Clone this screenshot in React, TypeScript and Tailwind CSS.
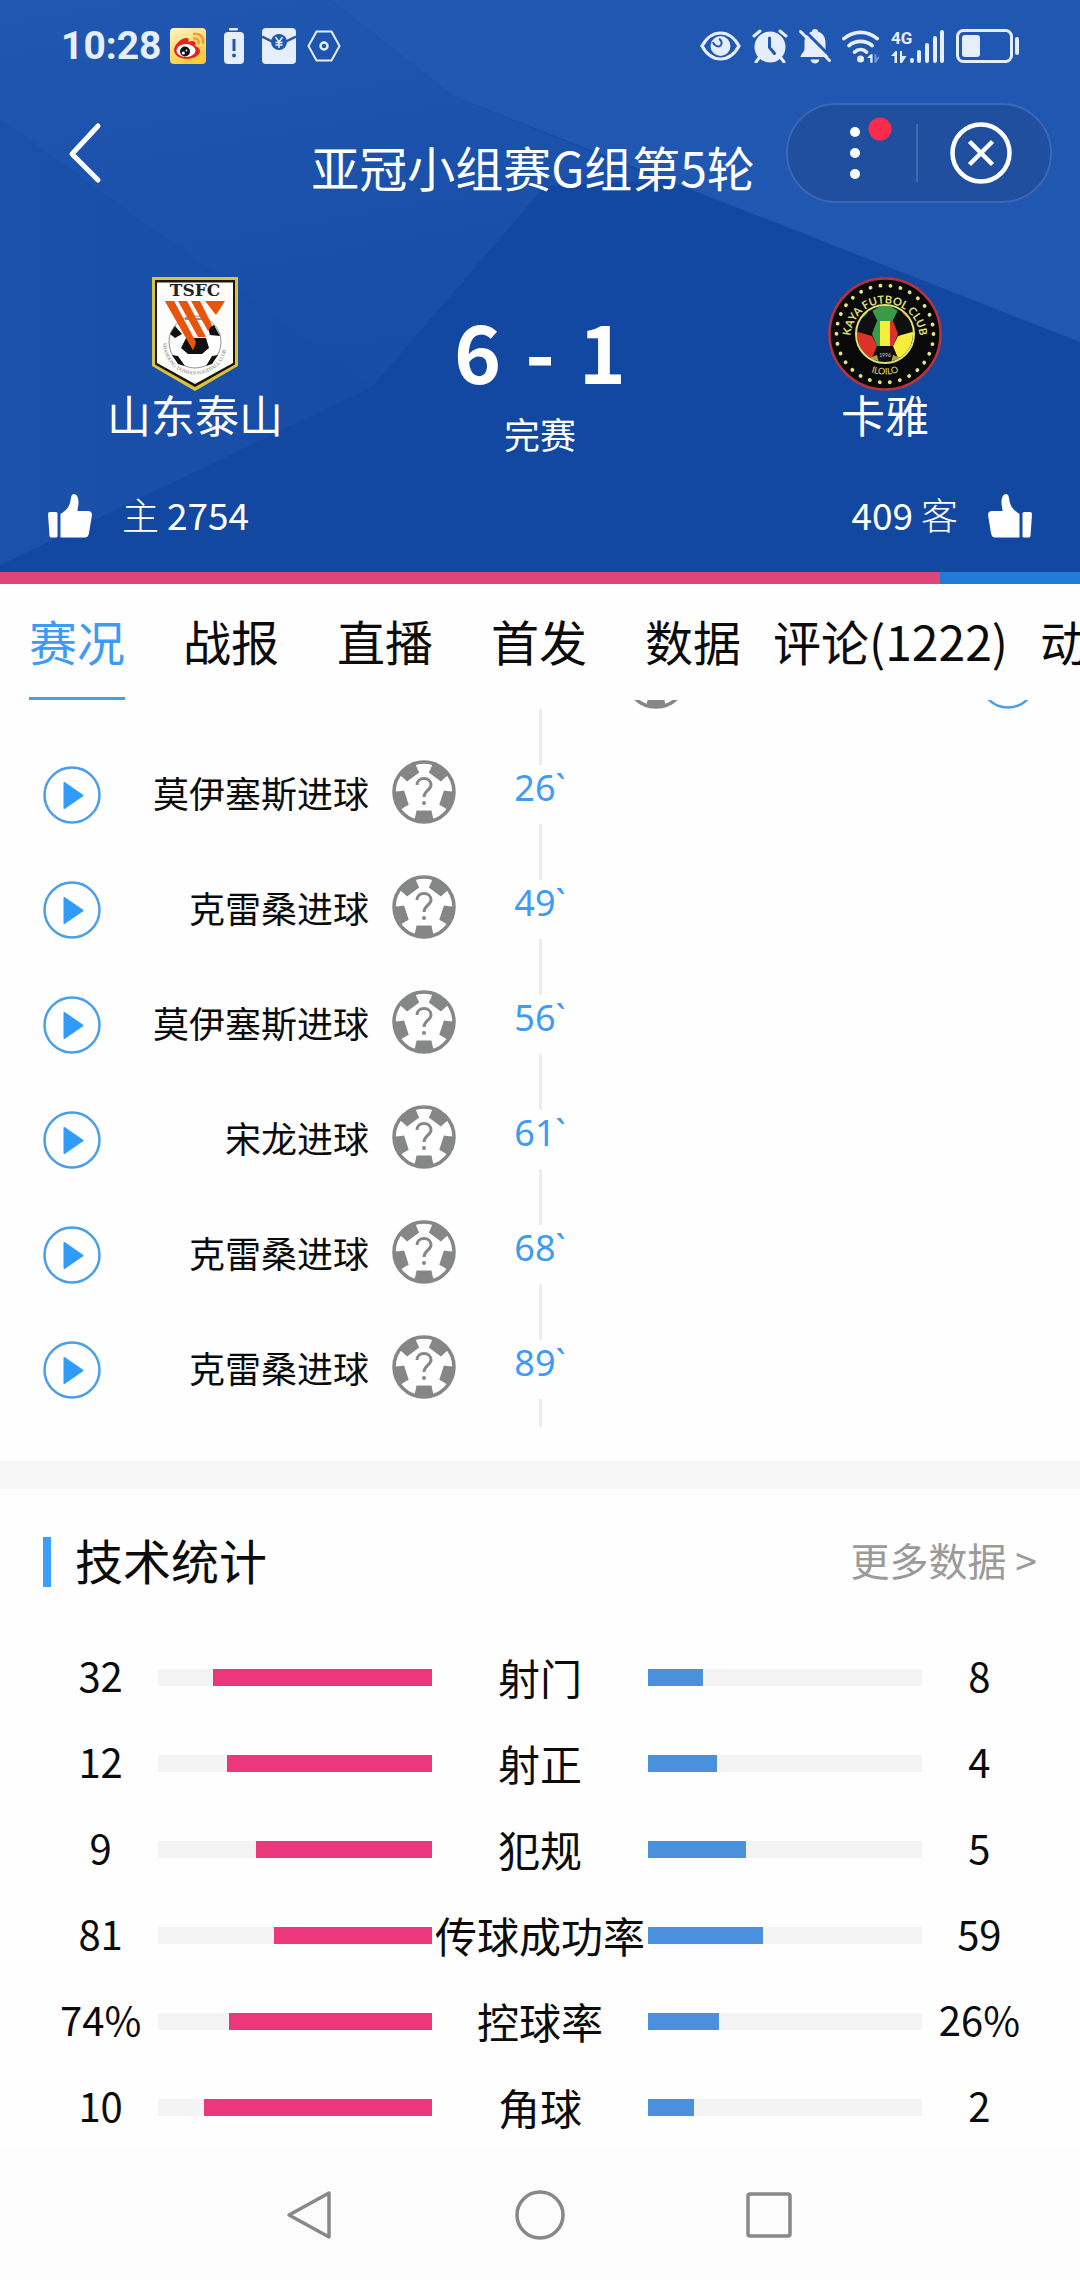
import React, { useState } from 'react';

interface MatchEvent {
  minute: string;
  side: 'home' | 'away';
  text: string;
}

interface Stat {
  label: string;
  home: string;
  away: string;
}

const tabs = ['赛况', '战报', '直播', '首发', '数据', '评论(1222)', '动态'];

const events: MatchEvent[] = [
  { minute: '', side: 'away', text: '' },
  { minute: '26`', side: 'home', text: '莫伊塞斯进球' },
  { minute: '49`', side: 'home', text: '克雷桑进球' },
  { minute: '56`', side: 'home', text: '莫伊塞斯进球' },
  { minute: '61`', side: 'home', text: '宋龙进球' },
  { minute: '68`', side: 'home', text: '克雷桑进球' },
  { minute: '89`', side: 'home', text: '克雷桑进球' },
];

const stats: Stat[] = [
  { label: '射门', home: '32', away: '8' },
  { label: '射正', home: '12', away: '4' },
  { label: '犯规', home: '9', away: '5' },
  { label: '传球成功率', home: '81', away: '59' },
  { label: '控球率', home: '74%', away: '26%' },
  { label: '角球', home: '10', away: '2' },
];

const likes = { home: 2754, away: 409 };

const share = (a: string, b: string) => (parseInt(a) / (parseInt(a) + parseInt(b))) * 100;

const WeiboIcon = () => (
  <svg width="36" height="36" viewBox="0 0 36 36">
    <defs>
      <linearGradient id="weibo-bg" x1="0" y1="0" x2="0.4" y2="1">
        <stop offset="0" stopColor="#fff3c4" />
        <stop offset="1" stopColor="#fdcb3e" />
      </linearGradient>
    </defs>
    <rect width="36" height="36" rx="4" fill="url(#weibo-bg)" />
    <path d="M4 22c0-5 7-12 12-12 3 0 3 2 2.500 4 3-1.500 7-1.500 7 2 0 1-.500 2-.500 2 3 1 5 2.500 5 5 0 4-6 8-13 8S4 27 4 22z" fill="#e1241d" />
    <ellipse cx="16" cy="22.500" rx="9.500" ry="6.500" fill="#fff" />
    <circle cx="15" cy="23.500" r="5" fill="#111" />
    <circle cx="13.300" cy="25" r="1.600" fill="#fff" />
    <circle cx="16.500" cy="22.500" r="0.900" fill="#fff" />
    <path d="M24 10.500c3-.500 5 1.500 4.500 4.500M24 6c6-1 10 3 9 9" fill="none" stroke="#f39a33" strokeWidth="2.400" strokeLinecap="round" />
  </svg>
);

const LowBatteryIcon = () => (
  <svg width="20" height="36" viewBox="0 0 20 36" fill="#e6eefb">
    <rect x="5" y="0" width="9" height="2.500" rx="1" />
    <rect x="0" y="4" width="20" height="32" rx="4" />
    <rect x="8.500" y="11" width="3" height="12" fill="#2057b0" />
    <circle cx="10" cy="27.500" r="2" fill="#2057b0" />
  </svg>
);

const EnvelopeIcon = () => (
  <svg width="34" height="36" viewBox="0 0 34 36">
    <rect width="34" height="36" rx="4" fill="#e6eefb" />
    <path d="M0 8.500 11 14M34 8.500 23 14" stroke="#2057b0" strokeWidth="2.500" />
    <circle cx="17" cy="14" r="8" fill="#2057b0" />
    <path d="m13.500 9 3.500 5 3.500-5M17 14v6M13.500 14.500h7M13.500 17h7" fill="none" stroke="#e6eefb" strokeWidth="1.500" />
  </svg>
);

const HexIcon = () => (
  <svg width="34" height="32" viewBox="0 0 34 32" fill="none" stroke="#e6eefb" strokeWidth="2">
    <path d="M9.500 1.500h15L32.500 16l-8 14.500h-15L1.500 16z" />
    <circle cx="17" cy="16" r="3.500" strokeWidth="2.500" />
  </svg>
);

const EyeIcon = () => (
  <svg width="41" height="30" viewBox="0 0 41 30">
    <path d="M2 15C7 6 13 2 20.500 2S34 6 39 15c-5 9-11 13-18.500 13S7 24 2 15z" fill="none" stroke="#e6eefb" strokeWidth="3.200" />
    <circle cx="20.500" cy="15" r="10" fill="#e6eefb" />
    <path d="M13 11c1 4 6 6 8 3 1.500-3 0-5-2-6" fill="none" stroke="#2057b0" strokeWidth="2" />
  </svg>
);

const AlarmIcon = () => (
  <svg width="36" height="34" viewBox="0 0 36 34">
    <circle cx="18" cy="18" r="15.500" fill="#e6eefb" />
    <path d="M2 7 8 2M34 7l-6-5M7 29l-3 4M29 29l3 4" stroke="#e6eefb" strokeWidth="3" strokeLinecap="round" />
    <path d="M17.500 9v9.500l5 6" fill="none" stroke="#2057b0" strokeWidth="3" strokeLinecap="round" />
  </svg>
);

const BellOffIcon = () => (
  <svg width="32" height="36" viewBox="0 0 32 36">
    <path d="M16 1c2 0 3 1 3 2.500 5 1.500 7.500 6 7.500 11V21c0 3 3 5 3 8H1.500c0-3 4-5 4-8v-7c0-5 3-9 7.500-10.500C13 2 14 1 16 1z" fill="#e6eefb" />
    <path d="M11.500 31.500h9c-.500 2.500-2.500 4-4.500 4s-4-1.500-4.500-4z" fill="#e6eefb" />
    <path d="M4 1 33 30" stroke="#2057b0" strokeWidth="3" />
    <path d="M1.500 3.500 30.500 32.500" stroke="#e6eefb" strokeWidth="3" strokeLinecap="round" />
  </svg>
);

const WifiIcon = () => (
  <svg width="38" height="34" viewBox="0 0 41 36">
    <g fill="none" stroke="#e6eefb" strokeWidth="4" strokeLinecap="round">
      <path d="M2 10c11-9 25-9 36 0" />
      <path d="M7.500 17.500c7-6 18-6 25 0" />
      <path d="M13.500 24.500c4-3.500 9-3.500 13 0" />
    </g>
    <circle cx="20" cy="32" r="3.800" fill="#e6eefb" />
    <path d="m27 31 4-4h2v9h-2.500v-5z" fill="#e6eefb" />
    <path d="M35 27h2v4l3-2v2l-3 5h-2z" fill="#6f97d6" />
  </svg>
);

const SignalIcon = () => (
  <svg width="54" height="36" viewBox="0 0 54 36" fill="#e6eefb">
    <text x="0" y="16" fontSize="17" fontWeight="700" fontFamily="Roboto, sans-serif">4G</text>
    <path d="m0 28 4.500-5H6v12H3.500v-7zM9 23h2v5h4.500L11 35H9z" />
    <rect x="19" y="30" width="4" height="5" rx="2" />
    <rect x="26" y="22" width="4" height="13" rx="2" />
    <rect x="34" y="15" width="4" height="20" rx="2" />
    <rect x="42" y="8" width="4" height="27" rx="2" />
    <rect x="49" y="2" width="4" height="33" rx="2" />
  </svg>
);

const BatteryIcon = () => (
  <svg width="64" height="34" viewBox="0 0 64 34">
    <rect x="1.500" y="1.500" width="54" height="31" rx="6" fill="none" stroke="#e6eefb" strokeWidth="3" />
    <rect x="6" y="6" width="18" height="22" rx="3" fill="#e6eefb" />
    <rect x="59" y="8" width="4" height="18" rx="2" fill="#e6eefb" />
  </svg>
);

const HomeCrest = () => (
  <svg width="86" height="114" viewBox="0 0 86 114">
    <path d="M0 0h86v89L43 114 0 89z" fill="#d8c23e" />
    <path d="M3 3h80v84.500L43 110 3 87.500z" fill="#1b1408" />
    <path d="M5 5.500h76v80.500L43 107 5 86z" fill="#fdfdfb" />
    <text x="43" y="19" textAnchor="middle" fontSize="17" fontWeight="700" fontFamily="DejaVu Serif, serif" fill="#222">TSFC</text>
    <circle cx="43" cy="65" r="26" fill="#fff" stroke="#777" strokeWidth="0.800" />
    <path d="M34 61h20l3 10-7 6H36l-7-6zM18 57l5-8 7 8-7 4zM56 51l6-3 6 11-10-1zM20 78l6 1 7 10-7-2zM66 78l-6 1-6 10 6-2z" fill="#111" />
    <path d="M33 42h20" stroke="#222" strokeWidth="1" />
    <path d="M13 24h9l21 44-2 5zM26 24h9l19 36h-8zM39 24h9l12 24-4 6zM53 24h20l-9 14z" fill="#e9540d" />
    <path d="M41 73 13 24h9l22 41z" fill="#e9540d" />
    <path id="crest-arc" d="M11 66c2 42 62 42 64 0" fill="none" />
    <text fontSize="5" fontFamily="Liberation Serif, serif" fill="#777">
      <textPath href="#crest-arc">SHANDONG TAISHAN FOOTBALL CLUB</textPath>
    </text>
  </svg>
);

const AwayCrest = () => (
  <svg width="114" height="114" viewBox="0 0 114 114">
    <circle cx="57" cy="57" r="55.500" fill="#090909" stroke="#b8323f" strokeWidth="2.500" />
    <circle cx="57" cy="57" r="48.500" fill="none" stroke="#e4e48a" strokeWidth="3.800" strokeLinecap="round" strokeDasharray="0.100 10.060" />
    <path id="kaya-top" d="M22.500 61a34.500 34.500 0 1 1 69 0" fill="none" />
    <path id="kaya-bottom" d="M40 94q17 7 34 0" fill="none" />
    <text fontSize="11" fontWeight="700" fontFamily="Lato, sans-serif" fill="#dfe07a">
      <textPath href="#kaya-top" startOffset="50%" textAnchor="middle">KAYA FUTBOL CLUB</textPath>
    </text>
    <text fontSize="9" fontFamily="Lato, sans-serif" fill="#dfe07a">
      <textPath href="#kaya-bottom" startOffset="50%" textAnchor="middle">ILOILO</textPath>
    </text>
    <clipPath id="kaya-ball">
      <circle cx="57" cy="57" r="28" />
    </clipPath>
    <g clipPath="url(#kaya-ball)">
      <rect x="28" y="28" width="58" height="58" fill="#101010" />
      <path d="M44 34 57 26l13 8-5 10H49z" fill="#3b9a48" />
      <path d="M26 54l18 5 5 10-5 12-12-3z" fill="#dd3129" />
      <path d="M88 54l-18 5-5 10 5 12 12-3z" fill="#f6ee3c" />
      <path d="M30 45l5-8 6-5-2 5-7 6z" fill="#3b9a48" />
      <path d="M84 45l-5-8-6-5 2 5 7 6z" fill="#dd3129" />
      <path d="M39 82l10-4 2 8zM75 82l-10-4-2 8z" fill="#b9a43a" />
      <path d="M49 44h4v25h-4l-5-12z" fill="#3b9a48" />
      <path d="M65 44h-4v25h4l5-12z" fill="#dd3129" />
      <rect x="52" y="44" width="10" height="25" fill="#f6ee3c" />
      <path d="M49 44 44 34M65 44l5-10M44 57l-1 2M70 57l1 2" stroke="#101010" strokeWidth="1" />
    </g>
    <text x="57" y="80" textAnchor="middle" fontSize="5" fontFamily="Lato, sans-serif" fill="#ccc">1996</text>
    <circle cx="57" cy="57" r="29" fill="none" stroke="#dfe07a" strokeWidth="2" />
  </svg>
);

const ThumbIcon = ({ flip }: { flip?: boolean }) => (
  <svg width="44" height="46" viewBox="0 0 44 46" fill="#fff" className={flip ? '-scale-x-100' : ''}>
    <path d="M1.500 19H8a1.500 1.500 0 0 1 1.500 1.500V43A1.500 1.500 0 0 1 8 44.500H3.500A2 2 0 0 1 1.500 43L0 21a2 2 0 0 1 1.500-2z" />
    <path d="M12.500 21c5-3 9-7 10-13 .500-4 1-7 3.500-7 3 0 4.500 4 4.500 8 0 4-1 6-1 9H40c3 0 4 2 4 4l-3 18c-.500 3-2 4.500-4 4.500H12.500z" />
  </svg>
);

const PlayIcon = () => (
  <svg width="58" height="58" viewBox="0 0 58 58">
    <circle cx="29" cy="29" r="27.500" fill="none" stroke="#4a9fe6" strokeWidth="2.500" />
    <path d="M20.500 17v25a1 1 0 0 0 1.500.800l18-12.500a1 1 0 0 0 0-1.600L22 16.200a1 1 0 0 0-1.500.800z" fill="#2f9bfb" />
  </svg>
);

const BallIcon = () => (
  <svg width="64" height="70" viewBox="0 0 64 70">
    <clipPath id="ball-clip">
      <circle cx="32" cy="32" r="31" />
    </clipPath>
    <circle cx="32" cy="32" r="30" fill="#fff" stroke="#858786" strokeWidth="3.500" />
    <g clipPath="url(#ball-clip)" fill="#858786">
      {[0, 72, 144, 216, 288].map(angle => (
        <path key={angle} d="M24.500 50.500h15l1 5 2 7.500h-21l2-7.500z" transform={`rotate(${angle} 32 32)`} />
      ))}
    </g>
    <path d="M25 25c0-4 3-6.500 7-6.500s7 2.500 7 6.500c0 5-7 5.500-7 12" fill="none" stroke="#858786" strokeWidth="3" />
    <circle cx="32" cy="43" r="2" fill="#858786" />
  </svg>
);

const EventSide = ({ event, side }: { event: MatchEvent; side: 'home' | 'away' }) => {
  if (event.side !== side) return <div />;
  return (
    <div className={`flex items-center px-[25px] ${side === 'away' ? 'flex-row-reverse' : ''}`}>
      <button aria-label="播放" className="mx-[18px] shrink-0">
        <PlayIcon />
      </button>
      <span className="flex-1 pb-[6px] text-right text-[36px] leading-[48px]">{event.text}</span>
      <span className={side === 'away' ? 'shrink-0' : 'ml-[23px] shrink-0'}>
        <BallIcon />
      </span>
    </div>
  );
};

const App: React.FC = () => {
  const [active, setActive] = useState('赛况');

  return (
    <div className="w-full overflow-hidden bg-[#fefefe] font-['Noto_Sans_CJK_SC','Noto_Sans',sans-serif] text-[#0c0c0c]">
      <header className="relative bg-[#1248a2] text-white">
        <svg className="absolute inset-0 h-full w-full" viewBox="0 0 1080 572" preserveAspectRatio="none">
          <defs>
            <linearGradient id="facet-mid" x1="0" y1="0" x2="0.3" y2="1">
              <stop offset="0" stopColor="#2057b0" />
              <stop offset="1" stopColor="#174da7" />
            </linearGradient>
            <linearGradient id="facet-left" x1="0" y1="0" x2="1" y2="0">
              <stop offset="0" stopColor="#1a51ab" />
              <stop offset="1" stopColor="#164ca6" />
            </linearGradient>
          </defs>
          <path d="M0 0h1080v572H0z" fill="#1248a2" />
          <path d="M0 0h330l125 97 206 83-116 6-173 201L0 119z" fill="url(#facet-mid)" />
          <path d="M0 119 372 387 0 565z" fill="url(#facet-left)" />
          <path d="M330 0h750v342L455 97z" fill="#2057b0" />
        </svg>

        <div className="relative">
          <div className="flex h-[92px] items-center justify-between pr-[60px] pl-[61px]">
            <div className="flex items-center">
              <span className="mr-[8px] font-['Roboto'] text-[39px] leading-[48px] font-bold text-[#e6eefb]">10:28</span>
              <div className="flex items-center gap-[18px]">
                <WeiboIcon />
                <LowBatteryIcon />
                <div className="flex items-center gap-[11px]">
                  <EnvelopeIcon />
                  <HexIcon />
                </div>
              </div>
            </div>
            <div className="flex items-center gap-[11px]">
              <EyeIcon />
              <AlarmIcon />
              <BellOffIcon />
              <WifiIcon />
              <SignalIcon />
              <BatteryIcon />
            </div>
          </div>

          <div className="mt-[11px] flex h-[100px] items-center justify-between pr-[28px] pl-[68px]">
            <button aria-label="返回" className="w-[212px]">
              <svg width="34" height="62" viewBox="0 0 34 62" fill="none" stroke="#fff" strokeWidth="5" strokeLinecap="round" strokeLinejoin="round">
                <path d="M30 4 4 32l26 26" />
              </svg>
            </button>
            <h1 className="self-end text-[48px] leading-[74px] whitespace-nowrap">亚冠小组赛G组第5轮</h1>
            <div className="flex h-full w-[266px] items-center rounded-full border-2 border-[#3a68b5] bg-[#1f4f9e] pr-[5px]">
              <button aria-label="更多" className="flex flex-1 justify-center">
                <svg width="64" height="56" viewBox="0 0 64 56" fill="#fff" className="overflow-visible">
                  <circle cx="35" cy="7" r="5" />
                  <circle cx="35" cy="28" r="5" />
                  <circle cx="35" cy="49" r="5" />
                  <circle cx="60" cy="4" r="11.500" fill="#fb2c4b" />
                </svg>
              </button>
              <div className="h-[58px] w-[2px] bg-[#3f6ab2]" />
              <button aria-label="关闭" className="flex flex-1 justify-center">
                <svg width="62" height="62" viewBox="0 0 62 62" fill="none" stroke="#fff" strokeWidth="4.500">
                  <circle cx="31" cy="31" r="28.500" />
                  <path d="m19.500 19.500 23 23m0-23-23 23" />
                </svg>
              </button>
            </div>
          </div>

          <div className="mt-[74px] grid grid-cols-[13fr_10fr_13fr] text-center">
            <div className="flex flex-col items-center">
              <HomeCrest />
              <span className="text-[44px] leading-[46px]">山东泰山</span>
            </div>
            <div className="pt-[32px]">
              <div className="flex justify-center gap-[24px] text-[80px] leading-[80px] font-bold">
                <span>6</span>
                <span>-</span>
                <span>1</span>
              </div>
              <div className="mt-[24px] text-[36px] leading-[40px]">完赛</div>
            </div>
            <div className="flex flex-col items-center">
              <AwayCrest />
              <span className="text-[44px] leading-[46px]">卡雅</span>
            </div>
          </div>

          <div className="mt-[40px] flex items-center justify-between px-[48px] pb-[33px] text-[37px] leading-[42px]">
            <button className="flex items-start gap-[30px]">
              <ThumbIcon />
              <span className="flex gap-2">
                <span className="font-light">主</span>
                <span>2754</span>
              </span>
            </button>
            <button className="flex items-start gap-[30px]">
              <span className="flex gap-2">
                <span>409</span>
                <span className="font-light">客</span>
              </span>
              <ThumbIcon flip />
            </button>
          </div>
        </div>
      </header>

      <div className="flex h-[12px] bg-[#237bd8]">
        <div className="bg-[#e0457a]" style={{ width: `${(likes.home / (likes.home + likes.away)) * 100}%` }} />
      </div>

      <nav className="flex h-[116px] overflow-hidden">
        {tabs.map(tab => (
          <button
            key={tab}
            onClick={() => setActive(tab)}
            className="flex min-w-[154px] shrink-0 justify-center px-[3px] text-[48px] leading-[113px] whitespace-nowrap"
          >
            <span
              className={
                active === tab
                  ? 'border-b-[3px] border-[#4a9fe0] text-[#3d9bf3]'
                  : 'border-b-[3px] border-transparent'
              }
            >
              {tab}
            </span>
          </button>
        ))}
      </nav>

      {/* the first event is scrolled half way under the tabs */}
      <section className="overflow-hidden pb-[34px]">
        <div className="-mt-[78px]">
          {events.map((event, i) => (
            <div key={i} className="grid h-[115px] grid-cols-[1fr_118px_1fr]">
              <EventSide event={event} side="home" />
              <div className="flex flex-col items-center">
                <div className="w-[3px] flex-1 bg-[#ececec]" />
                <div className="h-[59px] font-['Noto_Sans'] text-[36px] leading-[46px] text-[#3d9bf3]">{event.minute}</div>
                <div className="w-[3px] flex-1 bg-[#ececec]" />
              </div>
              <EventSide event={event} side="away" />
            </div>
          ))}
        </div>
      </section>

      <div className="h-[28px] bg-[#f7f7f7]" />

      <section className="px-[43px]">
        <div className="flex h-[145px] items-center justify-between">
          <h2 className="flex items-center gap-[24px] text-[48px] leading-[64px]">
            <span className="h-[50px] w-[8px] bg-[#3a9ffb]" />
            <span className="pb-[6px]">技术统计</span>
          </h2>
          <a href="#stats" className="pb-[6px] text-[39px] leading-[64px] text-[#9a9a9a]">更多数据 &gt;</a>
        </div>

        <div id="stats">
          {stats.map(stat => (
            <div key={stat.label} className="grid h-[86px] grid-cols-[115fr_273fr_216fr_273fr_115fr] items-center text-center text-[40px] leading-[48px]">
              <span className="pb-[4px]">{stat.home}</span>
              <div className="flex h-[17px] justify-end bg-[#f4f4f4]">
                <div className="bg-[#ec377c]" style={{ width: `${share(stat.home, stat.away)}%` }} />
              </div>
              <span className="text-[42px] whitespace-nowrap">{stat.label}</span>
              <div className="flex h-[17px] bg-[#f4f4f4]">
                <div className="bg-[#4a90dc]" style={{ width: `${share(stat.away, stat.home)}%` }} />
              </div>
              <span className="pb-[4px]">{stat.away}</span>
            </div>
          ))}
        </div>
      </section>

      <footer className="flex h-[130px] items-center justify-center gap-[180px] bg-[#fcfcfc]">
        <button aria-label="后退">
          <svg width="50" height="50" viewBox="0 0 50 50" fill="none" stroke="#888" strokeWidth="3.500" strokeLinejoin="round">
            <path d="M44 3v44L4 25z" />
          </svg>
        </button>
        <button aria-label="主页">
          <svg width="50" height="50" viewBox="0 0 50 50" fill="none" stroke="#888" strokeWidth="3.500">
            <circle cx="25" cy="25" r="23" />
          </svg>
        </button>
        <button aria-label="最近任务">
          <svg width="50" height="50" viewBox="0 0 50 50" fill="none" stroke="#888" strokeWidth="3.500">
            <rect x="3" y="4" width="42" height="42" rx="2" />
          </svg>
        </button>
      </footer>
    </div>
  );
};

export default App;
